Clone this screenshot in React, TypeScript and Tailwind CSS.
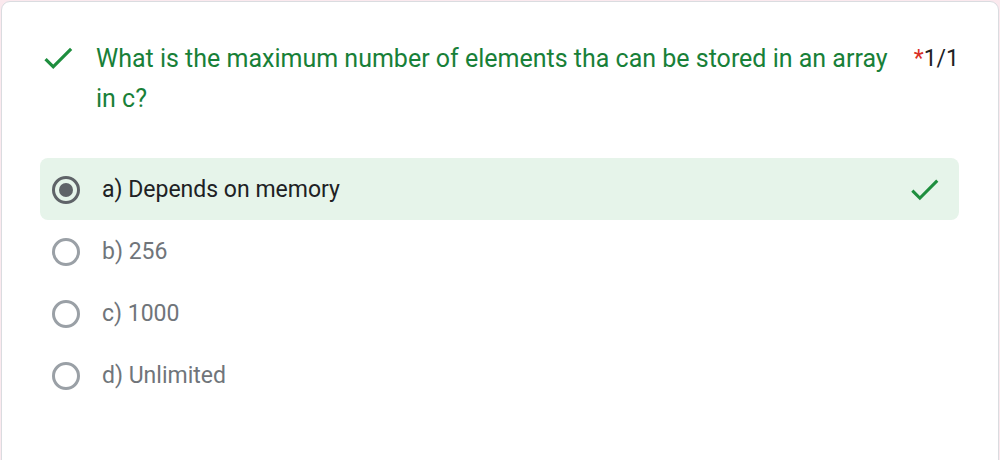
import React from "react";

const options = [
  { label: "a) Depends on memory", selected: true },
  { label: "b) 256", selected: false },
  { label: "c) 1000", selected: false },
  { label: "d) Unlimited", selected: false },
];

function Check({ className }: { className?: string }) {
  return (
    <svg viewBox="0 0 24 24" className={className} fill="currentColor">
      <path d="M9 16.17L4.83 12l-1.42 1.41L9 19 21 7l-1.41-1.41z" />
    </svg>
  );
}

export default function App() {
  return (
    <div className="w-[1000px] h-[460px] bg-[#fbe9ee] p-px font-['Roboto',sans-serif]">
      <div className="h-[470px] bg-white border border-[#dadce0] rounded-[9px] pt-[37px] pl-[38px] pr-[39px]">
        {/* pergunta */}
        <div className="flex items-start">
          <Check className="w-[38px] h-[38px] text-[#1e8e3e] shrink-0 -ml-[1px]" />
          <div className="flex-1 pl-[19px] pr-[18px] text-[25px] leading-[40px] text-[#188038]">
            What is the maximum number of elements tha can be stored in an array in c?
          </div>
          <div className="text-[23px] leading-[40px] text-[#202124] whitespace-nowrap">
            <span className="text-[#d93025]">*</span>1/1
          </div>
        </div>

        {/* alternativas */}
        <div className="mt-[39px] flex flex-col">
          {options.map((o) => (
            <div
              key={o.label}
              className={
                o.selected
                  ? "h-[62px] flex items-center rounded-[8px] bg-[#e6f4ea] pl-[12px] pr-[16px]"
                  : "h-[62px] flex items-center pl-[12px] pr-[16px]"
              }
            >
              <div
                className={
                  o.selected
                    ? "w-[28px] h-[28px] mt-[2px] rounded-full border-[3px] border-[#5f6368] flex items-center justify-center shrink-0"
                    : "w-[28px] h-[28px] mt-[2px] rounded-full border-[3px] border-[#9aa0a6] shrink-0"
                }
              >
                {o.selected && <div className="w-[14px] h-[14px] rounded-full bg-[#5f6368]" />}
              </div>
              <span
                className={
                  o.selected
                    ? "ml-[22px] pt-[3px] flex-1 text-[23px] text-[#202124]"
                    : "ml-[22px] pt-[3px] flex-1 text-[23px] text-[#70757a]"
                }
              >
                {o.label}
              </span>
              {o.selected && <Check className="w-[37px] h-[37px] text-[#1e8e3e]" />}
            </div>
          ))}
        </div>
      </div>
    </div>
  );
}
